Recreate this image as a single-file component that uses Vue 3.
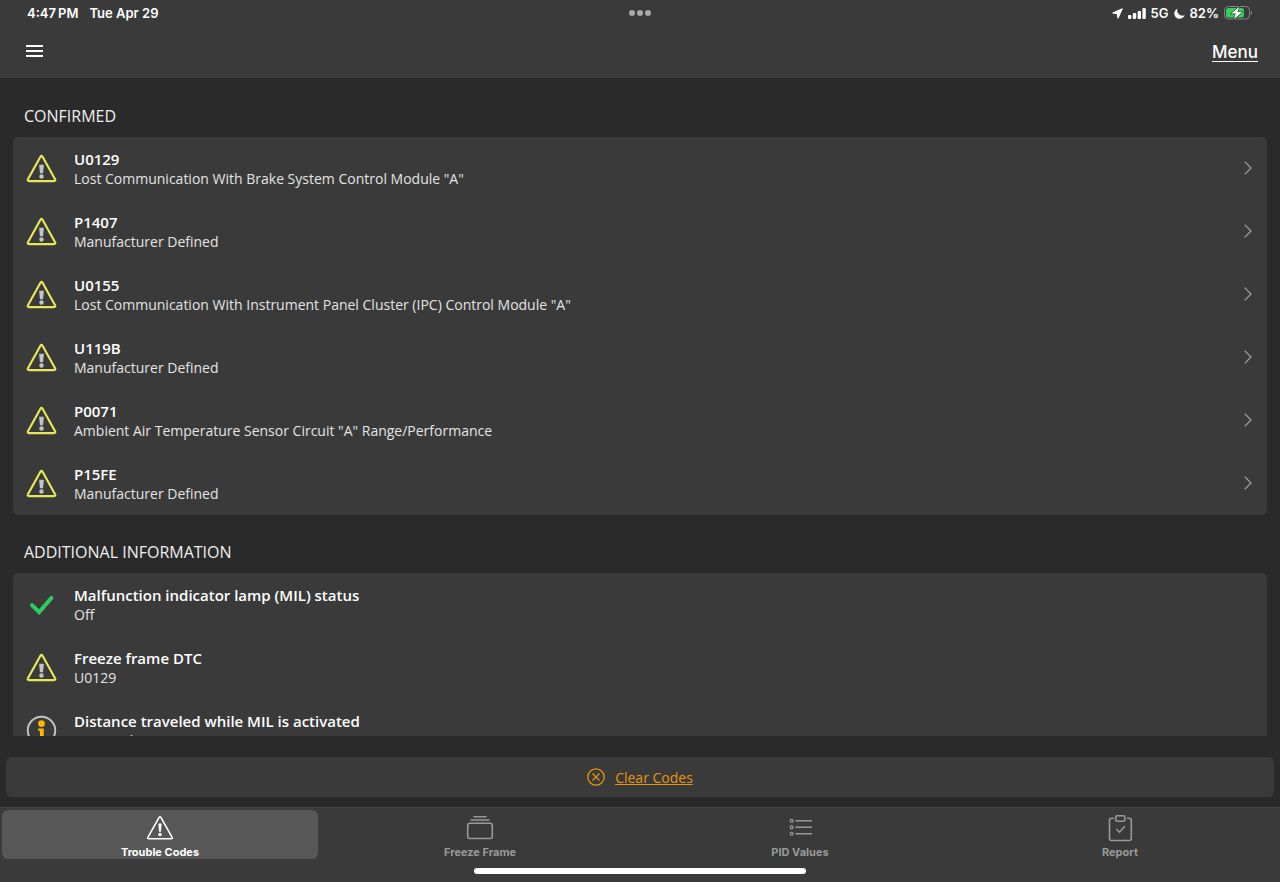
<script setup>
import { ref } from "vue";

const activeTab = ref("trouble");

const confirmed = [
    { code: "U0129", text: 'Lost Communication With Brake System Control Module "A"' },
    { code: "P1407", text: "Manufacturer Defined" },
    { code: "U0155", text: 'Lost Communication With Instrument Panel Cluster (IPC) Control Module "A"' },
    { code: "U119B", text: "Manufacturer Defined" },
    { code: "P0071", text: 'Ambient Air Temperature Sensor Circuit "A" Range/Performance' },
    { code: "P15FE", text: "Manufacturer Defined" },
];

const additional = [
    { icon: "check", title: "Malfunction indicator lamp (MIL) status", text: "Off" },
    { icon: "warning", title: "Freeze frame DTC", text: "U0129" },
    { icon: "info", title: "Distance traveled while MIL is activated", text: "124.3 miles" },
];

const tabs = [
    { id: "trouble", label: "Trouble Codes" },
    { id: "freeze", label: "Freeze Frame" },
    { id: "pid", label: "PID Values" },
    { id: "report", label: "Report" },
];
</script>

<template>
    <div class="app">
        <header class="top">
            <div class="status">
                <div class="status-left">
                    <span>4:47&thinsp;PM</span>
                    <span>Tue Apr 29</span>
                </div>
                <div class="dots"><i></i><i></i><i></i></div>
                <div class="status-right">
                    <svg width="11" height="11" viewBox="0 0 11 11">
                        <path d="M10.300.7 6 10.200 5.200 5.800.7 5z" fill="#fff" stroke="#fff" stroke-linejoin="round" />
                    </svg>
                    <svg class="signal" width="18" height="11" viewBox="0 0 18 11">
                        <rect x="0" y="7" width="3.400" height="4" rx="1" fill="#fff" />
                        <rect x="4.800" y="5" width="3.400" height="6" rx="1" fill="#fff" />
                        <rect x="9.600" y="3" width="3.400" height="8" rx="1" fill="#fff" />
                        <rect x="14.400" y="0" width="3.400" height="11" rx="1" fill="#fff" />
                    </svg>
                    <span>5G</span>
                    <svg width="11" height="11" viewBox="0 0 11 11">
                        <path d="M3.400.5A5.400 5.400 0 1 0 10.800 7.200C8.600 8.200 6.200 7.600 4.700 6 3.200 4.500 2.800 2.400 3.400.5z" fill="#fff" />
                    </svg>
                    <span>82%</span>
                    <svg width="28" height="14" viewBox="0 0 28 14">
                        <rect x=".5" y=".5" width="25" height="12.500" rx="4" fill="none" stroke="#858585" />
                        <path d="M26.800 4.800c1.600.6 1.600 3.400 0 4z" fill="#858585" />
                        <rect x="2" y="2" width="18" height="9.500" rx="2.500" fill="#32d158" />
                        <path d="M15.300.8 7.300 7.600h4.500L10.200 13l8-6.900h-4.600z" fill="#fff" stroke="#3a3a3a" stroke-width="1.200" paint-order="stroke" />
                    </svg>
                </div>
            </div>
            <nav class="nav">
                <button class="burger" type="button" aria-label="Open navigation">
                    <svg width="17" height="14" viewBox="0 0 17 14">
                        <path d="M0 1h17M0 6h17M0 11h17" stroke="#fff" stroke-width="2" />
                    </svg>
                </button>
                <a class="menu" href="#">Menu</a>
            </nav>
        </header>

        <main class="content">
            <section>
                <h2>CONFIRMED</h2>
                <div class="card">
                    <button v-for="item in confirmed" :key="item.code" class="row" type="button">
                        <svg class="icon" viewBox="0 0 32 32">
                            <path d="M14.900 3.900 2 27q-.9 2 1.100 2h25.800q2 0 1.100-2L17.100 3.900q-1.100-1.800-2.200 0z" fill="none" stroke="#e8e857" stroke-width="2.200" />
                            <path d="M14 12.100h4q.5 0 .4.600l-.8 8.300h-3.200l-.8-8.300q-.1-.6.4-.6z" fill="#c4c4c4" />
                            <circle cx="16" cy="24.200" r="2.300" fill="#c4c4c4" />
                        </svg>
                        <span class="text">
                            <span class="title">{{ item.code }}</span>
                            <span class="desc">{{ item.text }}</span>
                        </span>
                        <svg class="chevron" viewBox="0 0 8 14">
                            <path d="m.7.7 6.300 6.300-6.300 6.300" fill="none" stroke="#a2a2a2" stroke-width="1.200" />
                        </svg>
                    </button>
                </div>
            </section>

            <section>
                <h2>ADDITIONAL INFORMATION</h2>
                <div class="card">
                    <div v-for="item in additional" :key="item.title" class="row">
                        <svg v-if="item.icon === 'check'" class="icon" viewBox="0 0 32 32">
                            <path d="m6.300 16.800 7.300 7.100L26.200 9.300" fill="none" stroke="#2bcb5f" stroke-width="4.200" stroke-linecap="round" />
                        </svg>
                        <svg v-else-if="item.icon === 'warning'" class="icon" viewBox="0 0 32 32">
                            <path d="M14.900 3.900 2 27q-.9 2 1.100 2h25.800q2 0 1.100-2L17.100 3.900q-1.100-1.800-2.200 0z" fill="none" stroke="#e8e857" stroke-width="2.200" />
                            <path d="M14 12.100h4q.5 0 .4.600l-.8 8.300h-3.200l-.8-8.300q-.1-.6.4-.6z" fill="#c4c4c4" />
                            <circle cx="16" cy="24.200" r="2.300" fill="#c4c4c4" />
                        </svg>
                        <svg v-else class="icon" viewBox="0 0 32 32">
                            <circle cx="16" cy="16" r="14.200" fill="none" stroke="#c4c4c4" stroke-width="2" />
                            <circle cx="16" cy="8.800" r="3.500" fill="#fcb900" />
                            <path d="M12.600 14h5.700v9.800h1.800v2h-7.500v-2h1.800v-7.600h-1.800z" fill="#fcb900" />
                        </svg>
                        <span class="text">
                            <span class="title">{{ item.title }}</span>
                            <span class="desc">{{ item.text }}</span>
                        </span>
                    </div>
                </div>
            </section>
        </main>

        <button class="clear" type="button">
            <svg width="18" height="18" viewBox="0 0 18 18">
                <circle cx="9" cy="9" r="8.200" fill="none" stroke="#e8950c" stroke-width="1.300" />
                <path d="m5.500 5.500 7 7m0-7-7 7" stroke="#e8950c" stroke-width="1.200" />
            </svg>
            <span>Clear Codes</span>
        </button>

        <footer class="bottom">
            <nav class="tabs">
                <button
                    v-for="tab in tabs"
                    :key="tab.id"
                    class="tab"
                    :class="{ active: tab.id === activeTab }"
                    type="button"
                    @click="activeTab = tab.id"
                >
                    <svg v-if="tab.id === 'trouble'" width="28" height="28" viewBox="0 0 28 28" fill="none" stroke="currentColor" stroke-width="1.600">
                        <path d="M13.100 3.400 1.900 23.300q-.7 1.500.9 1.500h22.400q1.600 0 .9-1.500L14.900 3.400q-.9-1.300-1.800 0z" />
                        <path d="M12.400 9.500h3.200l-.6 8.200h-2z" fill="currentColor" stroke="none" />
                        <circle cx="14" cy="20.600" r="1.800" fill="currentColor" stroke="none" />
                    </svg>
                    <svg v-else-if="tab.id === 'freeze'" width="28" height="28" viewBox="0 0 28 28" fill="none" stroke="currentColor" stroke-width="1.600">
                        <path d="M7.500 2.700h13M4.500 6h19" />
                        <rect x="1.700" y="9.200" width="24.600" height="15.300" rx="2" />
                    </svg>
                    <svg v-else-if="tab.id === 'pid'" width="28" height="28" viewBox="0 0 28 28" fill="none" stroke="currentColor" stroke-width="1.600">
                        <path d="M9.500 6.800H26M9.500 13.300H26M9.500 19.700H26" />
                        <rect x="4.300" y="5.400" width="2.600" height="2.800" rx="1" stroke-width="1.200" />
                        <rect x="4.300" y="11.900" width="2.600" height="2.800" rx="1" stroke-width="1.200" />
                        <rect x="4.300" y="18.300" width="2.600" height="2.800" rx="1" stroke-width="1.200" />
                    </svg>
                    <svg v-else width="28" height="28" viewBox="0 0 28 28" fill="none" stroke="currentColor" stroke-width="1.600">
                        <path d="M7.800 4.300H5.500q-2 0-2 2v18.200q0 2 2 2h17.800q2 0 2-2V6.300q0-2-2-2H21" />
                        <rect x="9.700" y="1.700" width="9.200" height="5.500" rx="1.500" />
                        <path d="m10.200 15 3.200 3.200 5.400-6" />
                    </svg>
                    <span>{{ tab.label }}</span>
                </button>
            </nav>
            <div class="home"></div>
        </footer>
    </div>
</template>

<style>
body {
    background: #2a2a2a;
}
</style>

<style scoped>
.app {
    display: flex;
    flex-direction: column;
    height: 100vh;
    background: #2a2a2a;
    color: #fff;
    font-family: "Open Sans", sans-serif;
}

button {
    margin: 0;
    padding: 0;
    border: 0;
    background: none;
    color: inherit;
    font: inherit;
    text-align: left;
    cursor: pointer;
}

svg {
    display: block;
    flex: none;
}

.top {
    background: #3a3a3a;
    font-family: Inter, sans-serif;
}

.status {
    display: grid;
    grid-template-columns: 1fr auto 1fr;
    align-items: center;
    height: 26px;
    padding: 0 28px 0 27px;
    font-size: 13px;
    font-weight: 600;
}

.status-left {
    display: flex;
    gap: 11px;
}

.dots {
    display: flex;
    gap: 2px;
}

.dots i {
    width: 6px;
    height: 6px;
    border-radius: 50%;
    background: #a8a8a8;
}

.status-right {
    display: flex;
    align-items: center;
    justify-content: flex-end;
    gap: 5px;
}

.nav {
    display: flex;
    align-items: center;
    justify-content: space-between;
    height: 52px;
    padding: 0 22px 0 26px;
}

.menu {
    color: #fff;
    font-size: 17px;
    font-weight: 500;
    text-underline-offset: 3px;
}

.content {
    flex: 1;
    min-height: 0;
    overflow: hidden;
    padding: 0 13px;
}

h2 {
    margin: 0;
    padding: 26px 11px 9px;
    font-size: 16px;
    font-weight: 400;
    line-height: 24px;
    color: #efefef;
}

.card {
    margin-bottom: -1px;
    border-radius: 5px;
    background: #3a3a3a;
}

.row {
    display: flex;
    align-items: center;
    width: 100%;
    height: 63px;
    padding: 0 15px 1px 13px;
    box-sizing: border-box;
}

.icon {
    width: 31px;
    height: 31px;
    margin-right: 17px;
}

.text {
    flex: 1;
    display: flex;
    flex-direction: column;
    padding-top: 1px;
    line-height: 20px;
}

.title {
    font-size: 15px;
    font-weight: 600;
}

.desc {
    font-size: 14px;
    color: #e4e4e4;
}

.chevron {
    width: 8px;
    height: 14px;
}

.clear {
    display: flex;
    flex: none;
    align-items: center;
    justify-content: center;
    gap: 10px;
    height: 40px;
    margin: 21px 6px 10px;
    border-radius: 6px;
    background: #3a3a3a;
    color: #e8950c;
    font-size: 14px;
}

.clear span {
    text-decoration: underline;
}

.bottom {
    flex: none;
    padding-bottom: 8px;
    border-top: 1px solid #424242;
    background: #3a3a3a;
}

.tabs {
    display: grid;
    grid-template-columns: repeat(4, 1fr);
}

.tab {
    display: flex;
    flex-direction: column;
    align-items: center;
    gap: 3px;
    height: 49px;
    margin: 2px;
    padding-top: 4px;
    box-sizing: border-box;
    border-radius: 6px;
    color: #999;
    font-family: Inter, sans-serif;
    font-size: 11px;
    font-weight: 700;
    line-height: 14px;
}

.tab.active {
    background: #575757;
    color: #fff;
}

.home {
    width: 26%;
    height: 6px;
    margin: 7px auto 0;
    border-radius: 3px;
    background: #fff;
}
</style>
